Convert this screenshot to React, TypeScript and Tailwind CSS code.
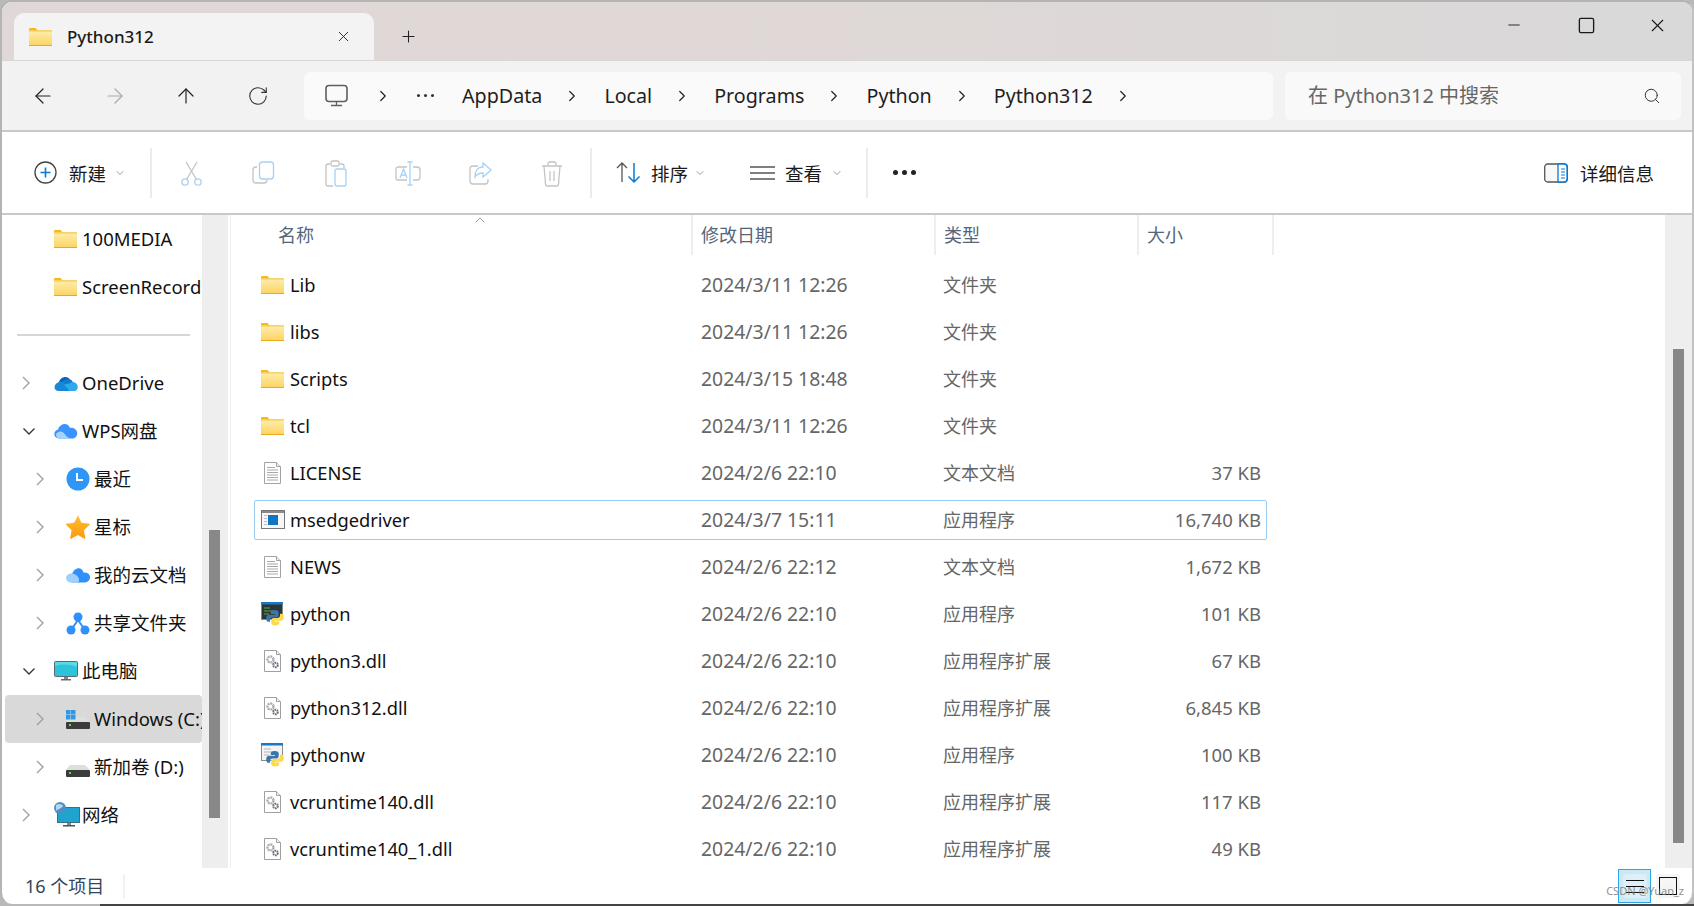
import { FC, ReactNode } from "react";
import { ArrowLeft, ArrowRight, ArrowUp, ChevronDown, ChevronRight, ChevronUp, Minus, Plus, RotateCw, Search, Square, X } from "lucide-react";

const FONT = "font-['Noto_Sans','Noto_Sans_CJK_SC',sans-serif]";

const FolderIcon: FC = () => (
  <svg width="23" height="18" viewBox="0 0 23 18" className="shrink-0">
    <defs>
      <linearGradient id="fold" x1="0" y1="0" x2="0" y2="1">
        <stop offset="0" stopColor="#fdeeb0" />
        <stop offset="1" stopColor="#fdd35f" />
      </linearGradient>
    </defs>
    <path d="M0 1.2C0 .5.5 0 1.2 0h5.2l2.4 2.4H0z" fill="#f7b918" />
    <rect x="0" y="2.4" width="23" height="15.6" fill="url(#fold)" />
    <rect x="0" y="2.4" width="23" height="1" fill="#f5bd2e" />
    <rect x="0" y="17" width="23" height="1" fill="#eaa91f" />
  </svg>
);

const DocIcon: FC = () => (
  <svg width="23" height="24" viewBox="0 0 23 24" className="shrink-0">
    <path d="M3.5 1.5h12l4 4v17h-16z" fill="#fff" stroke="#a3a3a3" />
    <path d="M15.5 1.5v4h4" fill="#eee" stroke="#a3a3a3" />
    <path d="M6 6.5h8M6 9h11M6 11.500h11M6 14h11M6 16.500h11M6 19h11" stroke="#a8a8a8" />
  </svg>
);

const DllIcon: FC = () => (
  <svg width="23" height="24" viewBox="0 0 23 24" className="shrink-0">
    <path d="M3.500 1.500h12l4 4v17h-16z" fill="#fff" stroke="#a0a0a0" />
    <path d="M15.500 1.500v4h4" fill="#eee" stroke="#a0a0a0" />
    <circle cx="9.500" cy="10.500" r="3" fill="none" stroke="#a9afb7" strokeWidth="2.400" strokeDasharray="2 0.700" />
    <circle cx="14.500" cy="16" r="2.300" fill="none" stroke="#6b7078" strokeWidth="2" strokeDasharray="1.600 0.600" />
  </svg>
);

const PythonLogo: FC = () => (
  <g>
    <path d="M14.800 8c-3.200 0-4 1-4 2.500V12h4.200v.8H9c-1.700 0-2.800 1.200-2.800 3.600 0 2.300 1 3.400 2.500 3.400H10v-1.900c0-1.500 1.200-2.500 2.700-2.500h3.900c1.200 0 2.100-1 2.100-2.200v-2.700C18.700 9 17.500 8 14.800 8z" fill="#3a76a8" />
    <path d="M15.200 23.500c3.200 0 4-1 4-2.500v-1.500H15v-.8h6c1.700 0 2.800-1.200 2.800-3.600 0-2.300-1-3.400-2.500-3.400H20v1.900c0 1.500-1.200 2.500-2.700 2.500h-3.900c-1.200 0-2.100 1-2.100 2.200v2.700c0 1.500 1.200 2.500 3.900 2.500z" fill="#fdd94f" />
  </g>
);

const PythonIcon: FC<{ dark?: boolean }> = ({ dark }) => (
  <svg width="24" height="24" viewBox="0 0 24 24" className="shrink-0 overflow-visible">
    <rect x="0.500" y="0.500" width="21" height="17" fill={dark ? "#2e3335" : "#f4f4f4"} stroke="#8b8b8b" />
    <rect x="0" y="0" width="22" height="2.500" fill="#1878c4" />
    {dark ? (
      <path d="M3 6h6M3 9h9M3 12h5" stroke="#4fae4f" strokeWidth="1" />
    ) : (
      <path d="M3 6h7M3 9h9M3 12h5" stroke="#b5b5b5" strokeWidth="1" />
    )}
    <g transform="translate(-1 0)">
      <PythonLogo />
    </g>
  </svg>
);

const ExeIcon: FC = () => (
  <svg width="24" height="21" viewBox="0 0 24 21" className="shrink-0">
    <rect x="0.500" y="0.500" width="23" height="18" fill="#f7f7f7" stroke="#777" />
    <rect x="1" y="1" width="22" height="2" fill="#8a8a8a" />
    <path d="M3 5.500h3M3 8.500h3M3 11.500h3M3 14.500h3" stroke="#bbb" />
    <rect x="7" y="5" width="10" height="10" fill="#0f76c6" />
  </svg>
);

const OneDriveIcon: FC = () => (
  <svg width="24" height="17" viewBox="0 0 24 17" className="shrink-0">
    <path d="M5 7c1-5 9-8 12-1l-4 5-8 1z" fill="#0b63b4" />
    <path d="M15 4.500c3 0 3.500 2 3.800 2.500l-6 5-6-3c1-3 5-5.500 8.200-4.500z" fill="#0f7ed1" />
    <path d="M5 7c3-.5 5 .5 6 2l8 5c-.5 1.500-1.500 2-3 2H4c-4.500-.5-5-7 1-9z" fill="#1787d6" />
    <path d="M18.500 7c3.500 0 6 3 5 6.500-.5 1.500-1.500 2.500-3 2.500h-5L10 9.500c3-1 5-.5 8.500-2.500z" fill="#2ea9ee" />
  </svg>
);

const WpsCloudIcon: FC = () => (
  <svg width="24" height="16" viewBox="0 0 24 16" className="shrink-0">
    <path d="M5 15.500c-6 0-6-8-1-9C6 0 14-1 16 5c5-1 9 4 6.500 8-1 2-3 2.500-4.500 2.500z" fill="#3a94fb" />
    <path d="M2 11c3-4 7-3 9 .5 2 3 5 4 8 4H5c-2 0-3-2-3-4.500z" fill="#a5d3fd" />
  </svg>
);

const ClockIcon: FC = () => (
  <svg width="24" height="24" viewBox="0 0 24 24" className="shrink-0">
    <circle cx="12" cy="12" r="11.500" fill="#2f95f6" />
    <path d="M11 6v7h6" fill="none" stroke="#fff" strokeWidth="2" />
  </svg>
);

const StarIcon: FC = () => (
  <svg width="24" height="24" viewBox="0 0 24 24" className="shrink-0">
    <defs>
      <linearGradient id="star" x1="0" y1="0" x2="0" y2="1">
        <stop offset="0" stopColor="#ffbd2e" />
        <stop offset="1" stopColor="#fe9a0e" />
      </linearGradient>
    </defs>
    <path d="M12 .5l3.500 7.200 7.800 1.100c.5.100.7.700.3 1l-5.700 5.500 1.400 7.800c.1.500-.4.900-.9.600L12 20l-6.900 3.700c-.5.300-1-.1-.9-.6l1.400-7.800L0 9.800c-.4-.3-.2-.9.300-1l7.800-1.100z" fill="url(#star)" />
  </svg>
);

const DocCloudIcon: FC = () => (
  <svg width="24" height="16" viewBox="0 0 24 16" className="shrink-0">
    <path d="M7 15.500c-6 0-5-7-1-8C8 0 16-1 17.500 5.500c4.500-.5 8 3 6 7-1 2-3 3-4.500 3z" fill="#2f90fb" />
    <path d="M5.500 6.500C1.500 6.500-1 10 .5 13c.8 1.700 2.500 2.500 4 2.500h6c2 0 3-1.500 2.500-3.500-.5-3-4-5.500-7.500-5.500z" fill="#9fd0fd" />
  </svg>
);

const ShareIcon: FC = () => (
  <svg width="24" height="23" viewBox="0 0 24 23" className="shrink-0">
    <path d="M12 8L5 18M12 8l7 10" stroke="#2f90fb" strokeWidth="2" />
    <circle cx="12" cy="5" r="4.500" fill="#2f90fb" />
    <circle cx="5" cy="18" r="4.500" fill="#2f90fb" />
    <circle cx="19" cy="18" r="4.500" fill="#2f90fb" />
  </svg>
);

const PcIcon: FC = () => (
  <svg width="24" height="20" viewBox="0 0 24 20" className="shrink-0">
    <rect x="0.500" y="0.500" width="23" height="15" rx="1" fill="#2dc3db" stroke="#5a6a72" />
    <path d="M1 1h22v5C15 3 8 3 1 5z" fill="#5ed8e8" />
    <rect x="10" y="16" width="4" height="2" fill="#7d8a90" />
    <rect x="7" y="18" width="10" height="1.500" fill="#5f6a70" />
  </svg>
);

const DriveIcon: FC<{ win?: boolean }> = ({ win }) => (
  <svg width="24" height="19" viewBox="0 0 24 19" className="shrink-0">
    <path d="M4 7h15l5 5H0z" fill="#dedede" />
    <rect x="0" y="12" width="24" height="7" rx="1" fill="#3c3c3c" />
    <rect x="3" y="14" width="2" height="2" fill="#5ce13a" />
    {win && (
      <g fill="#2b9ae8">
        <rect x="0" y="0" width="4.500" height="4.500" />
        <rect x="5" y="0" width="4.500" height="4.500" />
        <rect x="0" y="5" width="4.500" height="4.500" />
        <rect x="5" y="5" width="4.500" height="4.500" />
      </g>
    )}
  </svg>
);

const NetworkIcon: FC = () => (
  <svg width="26" height="26" viewBox="0 0 26 26" className="shrink-0">
    <rect x="3.500" y="5.500" width="22" height="15" fill="#1ea4cf" stroke="#3e6f85" />
    <rect x="13" y="21" width="4" height="2" fill="#7d8a90" />
    <rect x="9" y="23" width="12" height="1.500" fill="#3f5560" />
    <circle cx="6" cy="6" r="6" fill="#4e8fc7" />
    <path d="M2 3c3-2 6-1 7 1-2 3-5 3-7 5z" fill="#b5d6ee" />
  </svg>
);

const Chev: FC<{ open?: boolean }> = ({ open }) =>
  open ? (
    <svg width="14" height="9" viewBox="0 0 14 9" className="shrink-0">
      <path d="M1.500 1.500L7 7l5.500-5.500" fill="none" stroke="#333" strokeWidth="1.300" />
    </svg>
  ) : (
    <svg width="8" height="14" viewBox="0 0 8 14" className="shrink-0">
      <path d="M1 1l6 6-6 6" fill="none" stroke="#a0a0a0" strokeWidth="1.400" />
    </svg>
  );

const SideRow: FC<{ level: 0 | 1 | 2; open?: boolean; icon: ReactNode; label: string; active?: boolean }> = ({ level, open, icon, label, active }) => (
  <div className={`flex h-[48px] ml-[3px] items-center rounded-[4px] overflow-hidden whitespace-nowrap text-[18.500px] text-[#111] ${active ? "bg-[#d9d9d9]" : ""}`}>
    {level === 0 && <div className="w-[49px] shrink-0" />}
    {level === 1 && (
      <div className="w-[49px] shrink-0 pl-[17px] flex items-center">
        <Chev open={open} />
      </div>
    )}
    {level === 2 && (
      <div className="w-[61px] shrink-0 pl-[31px] flex items-center">
        <Chev />
      </div>
    )}
    <div className="w-[28px] shrink-0 flex items-center">{icon}</div>
    <span>{label}</span>
  </div>
);

const Sidebar: FC = () => (
  <div className="w-[200px] shrink-0 overflow-hidden">
    <SideRow level={0} icon={<FolderIcon />} label="100MEDIA" />
    <SideRow level={0} icon={<FolderIcon />} label="ScreenRecord" />
    <div className="h-[48px] flex items-center pl-[15px]">
      <div className="w-[173px] h-[2px] bg-[#d6d6d6]" />
    </div>
    <SideRow level={1} icon={<OneDriveIcon />} label="OneDrive" />
    <SideRow level={1} open icon={<WpsCloudIcon />} label="WPS网盘" />
    <SideRow level={2} icon={<ClockIcon />} label="最近" />
    <SideRow level={2} icon={<StarIcon />} label="星标" />
    <SideRow level={2} icon={<DocCloudIcon />} label="我的云文档" />
    <SideRow level={2} icon={<ShareIcon />} label="共享文件夹" />
    <SideRow level={1} open icon={<PcIcon />} label="此电脑" />
    <SideRow level={2} active icon={<DriveIcon win />} label="Windows (C:)" />
    <SideRow level={2} icon={<DriveIcon />} label="新加卷 (D:)" />
    <SideRow level={1} icon={<NetworkIcon />} label="网络" />
  </div>
);

const files: { icon: ReactNode; name: string; date: string; type: string; size: string; selected?: boolean }[] = [
  { icon: <FolderIcon />, name: "Lib", date: "2024/3/11 12:26", type: "文件夹", size: "" },
  { icon: <FolderIcon />, name: "libs", date: "2024/3/11 12:26", type: "文件夹", size: "" },
  { icon: <FolderIcon />, name: "Scripts", date: "2024/3/15 18:48", type: "文件夹", size: "" },
  { icon: <FolderIcon />, name: "tcl", date: "2024/3/11 12:26", type: "文件夹", size: "" },
  { icon: <DocIcon />, name: "LICENSE", date: "2024/2/6 22:10", type: "文本文档", size: "37 KB" },
  { icon: <ExeIcon />, name: "msedgedriver", date: "2024/3/7 15:11", type: "应用程序", size: "16,740 KB", selected: true },
  { icon: <DocIcon />, name: "NEWS", date: "2024/2/6 22:12", type: "文本文档", size: "1,672 KB" },
  { icon: <PythonIcon dark />, name: "python", date: "2024/2/6 22:10", type: "应用程序", size: "101 KB" },
  { icon: <DllIcon />, name: "python3.dll", date: "2024/2/6 22:10", type: "应用程序扩展", size: "67 KB" },
  { icon: <DllIcon />, name: "python312.dll", date: "2024/2/6 22:10", type: "应用程序扩展", size: "6,845 KB" },
  { icon: <PythonIcon />, name: "pythonw", date: "2024/2/6 22:10", type: "应用程序", size: "100 KB" },
  { icon: <DllIcon />, name: "vcruntime140.dll", date: "2024/2/6 22:10", type: "应用程序扩展", size: "117 KB" },
  { icon: <DllIcon />, name: "vcruntime140_1.dll", date: "2024/2/6 22:10", type: "应用程序扩展", size: "49 KB" },
];

const FileList: FC = () => (
  <div className="flex-1 relative overflow-hidden">
    {/* sort caret */}
    <ChevronUp size={16} strokeWidth={1} className="absolute left-[241px] top-[-3px] text-[#666]" />
    <div className="flex h-[40px] text-[18px] text-[#55657a]">
      <div className="w-[460px] pl-[47px] flex items-center">名称</div>
      <div className="w-[243px] pl-[8px] flex items-center border-l-2 border-[#eeeeee]">修改日期</div>
      <div className="w-[203px] pl-[8px] flex items-center border-l-2 border-[#eeeeee]">类型</div>
      <div className="w-[137px] pl-[8px] flex items-center border-x-2 border-[#eeeeee]">大小</div>
    </div>
    <div className="mt-[10px] ml-[23px] w-[1013px] flex flex-col gap-[7px]">
      {files.map((f) => (
        <div key={f.name} className={`flex h-[40px] items-center pl-[6px] rounded-[2px] border ${f.selected ? "border-[#99cdf5]" : "border-transparent"}`}>
          <div className="w-[29px] shrink-0 flex items-center">{f.icon}</div>
          <div className="w-[411px] shrink-0 text-[18.300px] text-[#111]">{f.name}</div>
          <div className="w-[242px] shrink-0 text-[19.400px] text-[#666]">{f.date}</div>
          <div className="w-[193px] shrink-0 text-[18px] text-[#666]">{f.type}</div>
          <div className="flex-1 text-right pr-[5px] text-[18.500px] text-[#666]">{f.size}</div>
        </div>
      ))}
    </div>
  </div>
);

const Crumb: FC<{ children: ReactNode }> = ({ children }) => (
  <>
    <span>{children}</span>
    <ChevronRight size={18} strokeWidth={1.600} className="ml-[21px] mr-[23px] text-[#222] shrink-0" />
  </>
);

const ToolIcon: FC<{ children: ReactNode }> = ({ children }) => (
  <div className="w-[72px] shrink-0 flex justify-center">
    <svg width="28" height="28" viewBox="0 0 28 28" fill="none">
      {children}
    </svg>
  </div>
);

const Sep: FC = () => <div className="w-[2px] h-[50px] bg-[#ececec] shrink-0" />;

const Toolbar: FC = () => (
  <div className="h-[81px] flex items-center pl-[32px] pr-[38px] bg-white text-[18.500px] text-[#1a1a1a]">
    <div className="w-[116px] flex items-center shrink-0">
      <svg width="23" height="23" viewBox="0 0 23 23" className="shrink-0">
        <circle cx="11.500" cy="11.500" r="10.500" fill="none" stroke="#444" strokeWidth="1.300" />
        <path d="M11.500 6.500v10M6.500 11.500h10" stroke="#0a78d4" strokeWidth="1.600" />
      </svg>
      <span className="ml-[12px] mt-[2px]">新建</span>
      <ChevronDown size={12} strokeWidth={1.200} className="ml-[8px] text-[#555]" />
    </div>
    <Sep />
    <div className="w-[4px] shrink-0" />
    <ToolIcon>
      <circle cx="7" cy="23" r="3.200" stroke="#a6d1f5" strokeWidth="1.300" />
      <circle cx="20" cy="23" r="3.200" stroke="#a6d1f5" strokeWidth="1.300" />
      <path d="M8.500 20.500L19 3M18.500 20.500L8 3" stroke="#c4c4c4" strokeWidth="1.300" />
    </ToolIcon>
    <ToolIcon>
      <path d="M7 8H6a3 3 0 0 0-3 3v10a3 3 0 0 0 3 3h8a3 3 0 0 0 3-3" stroke="#c4c4c4" strokeWidth="1.300" />
      <rect x="9.500" y="3" width="14" height="17" rx="3" stroke="#a6d1f5" strokeWidth="1.300" />
    </ToolIcon>
    <ToolIcon>
      <path d="M8 5H6a2 2 0 0 0-2 2v18a2 2 0 0 0 2 2h5M18 5h2a2 2 0 0 1 2 2v2" stroke="#c4c4c4" strokeWidth="1.300" />
      <rect x="9" y="2" width="8" height="5" rx="1.500" stroke="#c4c4c4" strokeWidth="1.300" />
      <rect x="13" y="10" width="11" height="17" rx="2" stroke="#a6d1f5" strokeWidth="1.300" />
    </ToolIcon>
    <ToolIcon>
      <path d="M13 8H4a2 2 0 0 0-2 2v9a2 2 0 0 0 2 2h9M19 8h4a3 3 0 0 1 3 3v7a3 3 0 0 1-3 3h-4" stroke="#c4c4c4" strokeWidth="1.300" />
      <path d="M6 19l3.500-9 3.500 9M7 16h5M16 3v23M13.500 3h5M13.500 26h5" stroke="#a6d1f5" strokeWidth="1.300" />
    </ToolIcon>
    <ToolIcon>
      <path d="M12 7H7a3 3 0 0 0-3 3v12a3 3 0 0 0 3 3h12a3 3 0 0 0 3-3v-2" stroke="#c4c4c4" strokeWidth="1.300" />
      <path d="M17 4l8 7-8 7v-4c-4 0-6 1-8 4 0-6 3-10 8-10z" stroke="#a6d1f5" strokeWidth="1.300" />
    </ToolIcon>
    <ToolIcon>
      <path d="M4 7h20M10 7V5a2 2 0 0 1 2-2h4a2 2 0 0 1 2 2v2M6 7l1.500 18a2 2 0 0 0 2 2h9a2 2 0 0 0 2-2L22 7M12 12v10M16 12v10" stroke="#c4c4c4" strokeWidth="1.300" />
    </ToolIcon>
    <div className="w-[2px] shrink-0" />
    <Sep />
    <div className="w-[24px] shrink-0" />
    <svg width="25" height="23" viewBox="0 0 25 23" className="shrink-0">
      <path d="M6 21V2M1 7l5-5 5 5" fill="none" stroke="#555" strokeWidth="1.300" />
      <path d="M18 2v19M12.500 15.500L18 21l5.500-5.500" fill="none" stroke="#0a78d4" strokeWidth="1.500" />
    </svg>
    <span className="ml-[10px] mt-[2px]">排序</span>
    <ChevronDown size={12} strokeWidth={1.200} className="ml-[6px] text-[#555]" />
    <svg width="25" height="16" viewBox="0 0 25 16" className="ml-[44px] shrink-0">
      <path d="M0 2h25M0 8h25M0 14h25" stroke="#555" strokeWidth="1.400" />
    </svg>
    <span className="ml-[10px] mt-[2px]">查看</span>
    <ChevronDown size={12} strokeWidth={1.200} className="ml-[9px] text-[#555]" />
    <div className="w-[23px] shrink-0" />
    <Sep />
    <div className="ml-[25px] flex gap-[4px]">
      <div className="w-[5px] h-[5px] rounded-full bg-[#222]" />
      <div className="w-[5px] h-[5px] rounded-full bg-[#222]" />
      <div className="w-[5px] h-[5px] rounded-full bg-[#222]" />
    </div>
    <div className="ml-auto flex items-center">
      <svg width="24" height="20" viewBox="0 0 24 20" className="shrink-0">
        <rect x="0.700" y="1" width="22.600" height="18" rx="3" fill="#f8f8f8" stroke="#555" strokeWidth="1.300" />
        <path d="M14 1h6a3 3 0 0 1 3 3v12a3 3 0 0 1-3 3h-6z" fill="#fff" stroke="#0a78d4" strokeWidth="1.300" />
        <path d="M17 6h4M17 9h4M17 12h4M17 15h4" stroke="#0a78d4" strokeWidth="1.200" />
      </svg>
      <span className="ml-[12px] mt-[2px]">详细信息</span>
    </div>
  </div>
);

const App: FC = () => (
  <div className={`h-[906px] w-[1694px] overflow-hidden bg-[#b9b9b9] ${FONT}`}>
    <div className="h-[904px] border-2 border-b-0 border-[#b4b4b4] border-r-[#c2c2c2] rounded-[12px] overflow-hidden flex flex-col bg-white">
      {/* tab strip */}
      <div className="h-[58px] shrink-0 flex items-start justify-between pt-[11px] bg-gradient-to-r from-[#dfd8d6] via-[#dfd8d7] to-[#d9d9d9]">
        <div className="flex items-center ml-[12px]">
          <div className="w-[360px] h-[47px] bg-[#f4f3f3] rounded-t-[10px] flex items-center pl-[15px] pr-[22px] text-[17px] font-medium text-[#1a1a1a]">
            <FolderIcon />
            <span className="ml-[15px]">Python312</span>
            <X size={17} strokeWidth={1.300} className="ml-auto text-[#222]" />
          </div>
          <Plus size={19} strokeWidth={1.300} className="ml-[25px] text-[#222]" />
        </div>
        <div className="flex items-center h-[24px] text-[#1a1a1a] mr-[24px]">
          <Minus size={18} strokeWidth={1.200} />
          <Square size={19} strokeWidth={1.700} className="ml-[54px]" />
          <X size={21} strokeWidth={1.300} className="ml-[51px]" />
        </div>
      </div>
      {/* nav row */}
      <div className="h-[72px] shrink-0 flex items-center bg-[#f3f2f2] border-y border-[#d9d5d4] border-b-2 border-b-[#cbc7c5]">
        <div className="w-[302px] shrink-0 flex items-center pl-[29px]">
          <ArrowLeft size={24} strokeWidth={1.200} className="text-[#222]" />
          <ArrowRight size={24} strokeWidth={1.200} className="ml-[48px] text-[#a9a9a9]" />
          <ArrowUp size={24} strokeWidth={1.200} className="ml-[47px] text-[#222]" />
          <RotateCw size={22} strokeWidth={1.200} className="ml-[49px] text-[#333]" />
        </div>
        <div className="w-[969px] h-[48px] shrink-0 flex items-center rounded-[6px] bg-[#fafafa] pl-[21px] text-[19.700px] text-[#1f1f1f]">
          <svg width="24" height="24" viewBox="0 0 24 24" className="shrink-0">
            <rect x="1" y="1.500" width="21" height="16" rx="3" fill="none" stroke="#5f5f5f" strokeWidth="1.600" />
            <path d="M11.500 18v3M6 21.500h11" stroke="#5f5f5f" strokeWidth="1.300" />
          </svg>
          <ChevronRight size={18} strokeWidth={1.600} className="ml-[25px] mr-[25px] text-[#222] shrink-0" />
          <div className="flex gap-[4px] mr-[28px]">
            <div className="w-[3px] h-[3px] rounded-full bg-[#333]" />
            <div className="w-[3px] h-[3px] rounded-full bg-[#333]" />
            <div className="w-[3px] h-[3px] rounded-full bg-[#333]" />
          </div>
          <Crumb>AppData</Crumb>
          <Crumb>Local</Crumb>
          <Crumb>Programs</Crumb>
          <Crumb>Python</Crumb>
          <Crumb>Python312</Crumb>
        </div>
        <div className="ml-[12px] w-[396px] h-[48px] shrink-0 flex items-center justify-between rounded-[6px] bg-[#f9f9f9] pl-[23px] pr-[20px] text-[20px] text-[#666]">
          <span>在 Python312 中搜索</span>
          <Search size={18} strokeWidth={1.300} className="text-[#333]" />
        </div>
      </div>
      <Toolbar />
      {/* body */}
      <div className="h-[655px] shrink-0 flex border-t-2 border-[#cbc7c5]">
        <Sidebar />
        <div className="w-[26px] shrink-0 bg-[#eeeeee] pl-[7px] pt-[315px]">
          <div className="w-[11px] h-[288px] bg-[#888888]" />
        </div>
        <div className="w-[3px] shrink-0 border-r border-[#efefef]" />
        <FileList />
        <div className="w-[27px] shrink-0 bg-[#eeeeee] pl-[8px] pt-[134px]">
          <div className="w-[11px] h-[494px] bg-[#888888]" />
        </div>
      </div>
      {/* status bar */}
      <div className="flex-1 flex items-center pl-[23px] pr-[12px] text-[18px] text-[#34465a] relative">
        <span>16 个项目</span>
        <div className="ml-[19px] w-[2px] h-[24px] bg-[#f1f1f1]" />
        <div className="ml-auto flex items-center gap-[5px]">
          <div className="w-[33px] h-[34px] border border-[#2ea3e6] bg-[#cbe8f7] flex items-center justify-center">
            <div className="w-[24px] h-[24px] rounded-[3px] bg-[#dfeff9] flex flex-col gap-[5px] justify-center items-center">
              <div className="w-[18px] h-[1px] bg-[#111]" />
              <div className="w-[18px] h-[1px] bg-[#111]" />
              <div className="w-[18px] h-[1px] bg-[#111]" />
            </div>
          </div>
          <div className="w-[24px] h-[24px] rounded-[3px] bg-[#f6f6f6] flex items-center justify-center">
            <div className="w-[18px] h-[18px] border border-[#111]" />
          </div>
        </div>
        {/* watermark */}
        <span className="absolute right-[8px] top-[15px] text-[11px] text-[#777] opacity-80">CSDN @Yuan_z</span>
      </div>
    </div>
    <div className="h-[2px] ml-[100px] bg-[#444]" />
  </div>
);

export default App;
